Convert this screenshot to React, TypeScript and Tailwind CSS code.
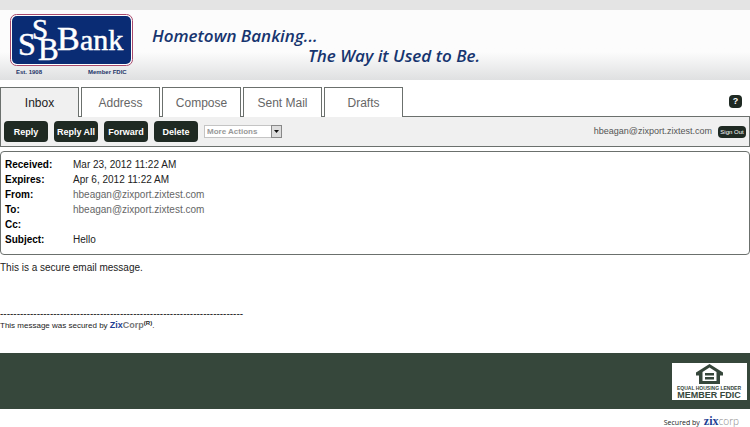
import type { ReactNode } from "react";

const tabs = ["Inbox", "Address", "Compose", "Sent Mail", "Drafts"];
const actions = ["Reply", "Reply All", "Forward", "Delete"];

const details = [
  { label: "Received:", value: "Mar 23, 2012 11:22 AM" },
  { label: "Expires:", value: "Apr 6, 2012 11:22 AM" },
  { label: "From:", value: "hbeagan@zixport.zixtest.com", muted: true },
  { label: "To:", value: "hbeagan@zixport.zixtest.com", muted: true },
  { label: "Cc:", value: "" },
  { label: "Subject:", value: "Hello" },
];

function BankLogo() {
  return (
    <svg width="124" height="62" viewBox="0 0 124 62" role="img" aria-label="SSB Bank">
      <rect x="0.5" y="0.5" width="122" height="51" rx="6" fill="#fff" stroke="#a8496b" />
      <rect x="2" y="2" width="119" height="48" rx="5" fill="#0a2c74" />
      {/* Interlocked monogram, then the rest of the name */}
      <g fill="#fff" stroke="#fff" strokeWidth="0.5" fontFamily="Liberation Serif, serif">
        <text x="8" y="41" fontSize="32">S</text>
        <text x="22" y="25" fontSize="29">S</text>
        <text x="28" y="46" fontSize="31">B</text>
        <text x="47" y="36" fontSize="34">B</text>
        <text x="70" y="36" fontSize="30">ank</text>
      </g>
      <g fill="#1d3468" fontFamily="Liberation Sans, sans-serif" fontWeight="700" fontSize="6">
        <text x="6" y="60">Est. 1908</text>
        <text x="78" y="60">Member FDIC</text>
      </g>
    </svg>
  );
}

function LenderLogo() {
  return (
    <svg width="75" height="37" viewBox="0 0 75 37" role="img" aria-label="Equal Housing Lender, Member FDIC">
      <rect width="75" height="37" fill="#fff" />
      <path d="M37.500 1 L51 9.500 V12.500 H48 V21 H27 V12.500 H24 V9.500 Z" fill="#36473b" />
      <path d="M37.500 4.500 L44.500 9 V18 H30.500 V9 Z" fill="#fff" />
      <path d="M33 10 H42 V12.500 H33 Z M33 14 H42 V16.500 H33 Z" fill="#36473b" />
      <g fill="#36473b" fontFamily="Liberation Sans, sans-serif" fontWeight="700" textAnchor="middle">
        <text x="37" y="27" fontSize="5">EQUAL HOUSING LENDER</text>
        <text x="37" y="35" fontSize="9">MEMBER FDIC</text>
      </g>
    </svg>
  );
}

function DarkButton({ className, children }: { className: string; children: ReactNode }) {
  return (
    <button type="button" className={`rounded bg-[#1f2a23] text-white whitespace-nowrap ${className}`}>
      {children}
    </button>
  );
}

export default function App() {
  return (
    <div className="bg-white font-['Liberation_Sans',Arial,sans-serif] text-[10px] leading-[15px] text-[#222]">
      {/* Header */}
      <div className="h-[10px] bg-[#e4e4e4]" />
      <header className="flex h-[70px] items-start bg-linear-to-b from-[#fcfcfc] from-60% to-[#dfe0e1] pl-[10px] pt-1">
        <BankLogo />
        <div className="pl-[18px] pt-3 font-['Open_Sans',sans-serif] text-[17px] font-semibold italic leading-5 text-[#17356f]">
          <p>Hometown Banking...</p>
          <p className="pl-[156px]">The Way it Used to Be.</p>
        </div>
      </header>

      {/* Tabs */}
      <nav className="flex h-[37px] pt-[7px] text-xs">
        {tabs.map((tab, i) => (
          <div key={tab} className="flex">
            <a
              href="#"
              className={`flex w-[79px] items-center justify-center border-x border-t border-[#6b706d] ${
                i === 0 ? "bg-[#f0f0f0] text-[#222]" : "bg-white text-[#666]"
              }`}
            >
              {tab}
            </a>
            {i < tabs.length - 1 && <span className="w-[2px] border-b border-[#6b706d]" />}
          </div>
        ))}
        <div className="flex flex-1 items-center justify-end border-b border-[#6b706d] pr-2">
          <DarkButton className="h-[13px] w-[13px] text-[9px] font-bold leading-[13px]">?</DarkButton>
        </div>
      </nav>

      {/* Toolbar */}
      <div className="flex h-[30px] items-center gap-[6px] border-x border-b border-[#6b706d] bg-[#f0f0f0] px-[3px]">
        {actions.map((action) => (
          <DarkButton key={action} className="h-[21px] w-11 pt-px text-[9px] font-bold">
            {action}
          </DarkButton>
        ))}
        <div className="relative flex">
          <select
            aria-label="More Actions"
            className="h-[13px] w-[78px] appearance-none border border-[#c4c4c4] bg-white pl-[2px] text-[8px] font-bold leading-[11px] text-[#999]"
          >
            <option>More Actions</option>
          </select>
          <span className="pointer-events-none absolute inset-y-0 right-0 flex w-[11px] items-center justify-center border border-[#888] bg-[#ddd]">
            <svg width="5" height="3" viewBox="0 0 5 3">
              <path d="M0 0H5L2.500 3Z" fill="#111" />
            </svg>
          </span>
        </div>
        <span className="ml-auto text-[9px] text-[#555]">hbeagan@zixport.zixtest.com</span>
        <DarkButton className="h-3 w-7 text-[6px] leading-3">Sign Out</DarkButton>
      </div>

      {/* Message details */}
      <section className="mt-1 rounded border border-[#6b706d] pb-[7px] pl-1 pt-[5px]">
        <table>
          <tbody>
            {details.map((row) => (
              <tr key={row.label} className="h-[15px]">
                <th scope="row" className="w-[68px] p-0 text-left font-bold text-black">
                  {row.label}
                </th>
                <td className={row.muted ? "text-[#666]" : "text-[#222]"}>{row.value}</td>
              </tr>
            ))}
          </tbody>
        </table>
      </section>

      {/* Message body */}
      <main className="h-[98px] pt-[5px]">
        <p>This is a secure email message.</p>
        <p className="mt-8 leading-[13px]">{"-".repeat(73)}</p>
        <p className="text-[8px] leading-[11px]">
          This message was secured by{" "}
          <a href="#" className="text-[9px] font-bold text-[#777]">
            <span className="text-[#1f3f94]">Zix</span>Corp
          </a>
          <sup className="text-[6px] font-bold">(R)</sup>.
        </p>
      </main>

      {/* Footer */}
      <footer>
        <div className="flex h-14 items-center justify-end bg-[#36473b] pr-[3px]">
          <LenderLogo />
        </div>
        <p className="flex items-baseline justify-end gap-1 pr-[11px] pt-[6px] font-['Open_Sans',sans-serif] text-[7px] leading-[13px]">
          Secured by
          <span className="font-['Liberation_Serif',serif] text-[12px] font-bold text-[#1f3f94]">
            zix<span className="font-['Open_Sans',sans-serif] text-[10px] font-light text-[#888]">corp</span>
          </span>
        </p>
      </footer>
    </div>
  );
}
